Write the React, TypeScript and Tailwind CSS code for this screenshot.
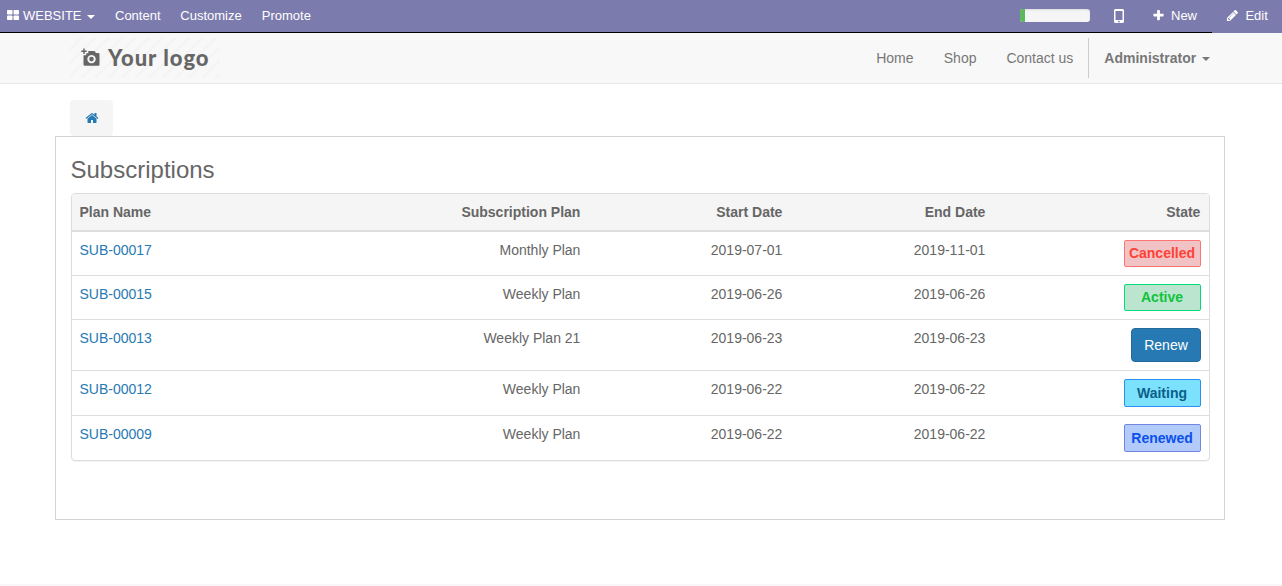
import React from "react";

type Row = {
  id: string;
  plan: string;
  start: string;
  end: string;
  state: string;
  height: string;
  badge: string;
};

const badge = "block w-[77px] rounded-[2px] border pr-px text-center font-bold ";

const rows: Row[] = [
  { id: "SUB-00017", plan: "Monthly Plan", start: "2019-07-01", end: "2019-11-01", state: "Cancelled", height: "h-11 border-b", badge: badge + "h-[27px] leading-[25px] border-[#ff7474] bg-[#f2c3c5] text-[#ff4136]" },
  { id: "SUB-00015", plan: "Weekly Plan", start: "2019-06-26", end: "2019-06-26", state: "Active", height: "h-11 border-b", badge: badge + "h-[27px] leading-[25px] border-[#00dc78] bg-[#bce5d0] text-[#0fc33c]" },
  { id: "SUB-00013", plan: "Weekly Plan 21", start: "2019-06-23", end: "2019-06-23", state: "Renew", height: "h-[51px] border-b", badge: "block h-[34px] w-[70px] rounded border border-[#246a9c] bg-[#2779b4] text-center leading-8 text-white" },
  { id: "SUB-00012", plan: "Weekly Plan", start: "2019-06-22", end: "2019-06-22", state: "Waiting", height: "h-[45px] border-b", badge: badge + "h-7 leading-[27px] border-[#2a8ff0] bg-[#7be1fc] text-[#0c5f8a]" },
  { id: "SUB-00009", plan: "Weekly Plan", start: "2019-06-22", end: "2019-06-22", state: "Renewed", height: "h-11", badge: badge + "h-7 leading-[27px] border-[#7287e4] bg-[#b3cbfa] text-[#0a50ec]" },
];

const columns = "grid grid-cols-[517px_202px_203px_215px]";

function Glyph({ d, className, viewBox = "0 0 1792 1792" }: { d: string; className: string; viewBox?: string }) {
  return (
    <svg viewBox={viewBox} className={className} fill="currentColor" aria-hidden="true">
      <path d={d} />
    </svg>
  );
}

const homePath =
  "M1472 992v480q0 26-19 45t-45 19h-384v-384h-256v384h-384q-26 0-45-19t-19-45v-480q0-1 .5-3t.5-3l575-474 575 474q1 2 1 6zm223-69l-62 74q-8 9-21 11h-3q-13 0-21-7l-692-577-692 577q-12 8-24 7-13-2-21-11l-62-74q-8-10-7-23.5t11-21.5l719-599q32-26 76-26t76 26l244 204v-195q0-14 9-23t23-9h192q14 0 23 9t9 23v408l219 182q10 8 11 21.5t-7 23.5z";
const plusPath =
  "M1600 736v192q0 40-28 68t-68 28h-416v416q0 40-28 68t-68 28h-192q-40 0-68-28t-28-68v-416h-416q-40 0-68-28t-28-68v-192q0-40 28-68t68-28h416v-416q0-40 28-68t68-28h192q40 0 68 28t28 68v416h416q40 0 68 28t28 68z";
const pencilPath =
  "M491 1536l91-91-235-235-91 91v107h128v128h107zm523-928q0-22-22-22-10 0-17 7l-542 542q-7 7-7 17 0 22 22 22 10 0 17-7l542-542q7-7 7-17zm-54-192l416 416-832 832h-416v-416zm683 96q0 53-37 90l-166 166-416-416 166-165q36-38 90-38 53 0 91 38l235 234q37 39 37 91z";

function TopBar() {
  return (
    <header className="flex h-[33px] bg-[#7c7bad] text-[13px] text-white">
      <div className="flex h-[33px] w-[1212px] border-b border-black leading-8">
        <div className="flex w-[115px] items-center pl-[7px]">
          <svg viewBox="0 0 12 10" className="mr-1 mb-[3px] h-[10px] w-3" fill="currentColor">
            <rect width="5.5" height="4.5" rx=".8" /><rect x="6.5" width="5.5" height="4.5" rx=".8" />
            <rect y="5.5" width="5.5" height="4.5" rx=".8" /><rect x="6.5" y="5.5" width="5.5" height="4.5" rx=".8" />
          </svg>
          <span className="w-[64px] whitespace-nowrap">WEBSITE</span>
          <span className="mt-[2px] border-x-4 border-t-4 border-x-transparent border-t-white" />
        </div>
        <span className="w-[65.3px]">Content</span>
        <span className="w-[81.5px]">Customize</span>
        <span>Promote</span>
        <div className="ml-auto flex items-center">
          <div className="mb-[1px] h-[13px] w-[70px] overflow-hidden rounded-[3px] bg-[#f5f5f5] shadow-[inset_0_1px_2px_rgba(0,0,0,0.1)]">
            <div className="h-full w-[5px] bg-[#5cb85c]" />
          </div>
          <svg viewBox="0 0 10 14" className="ml-6 h-[14px] w-[10px]">
            <path fill="white" fillRule="evenodd" d="M1.5 0h7Q10 0 10 1.5v11Q10 14 8.500 14h-7Q0 14 0 12.500v-11Q0 0 1.500 0ZM1.500 2v9h7V2ZM5 11.700a.8.8 0 1 0 .01 0Z" />
          </svg>
          <Glyph d={plusPath} className="mb-px ml-[28px] h-[13px] w-[13px]" />
          <span className="ml-[6px] w-[41px]">New</span>
        </div>
      </div>
      <div className="flex h-8 items-center pl-[14px]">
        <Glyph d={pencilPath} className="mb-px h-[13px] w-[13px]" />
        <span className="ml-[6.4px]">Edit</span>
      </div>
    </header>
  );
}

function Logo() {
  return (
    <div className="mt-[5px] flex h-10 w-[150px] items-center bg-[repeating-linear-gradient(135deg,#f8f8f8_0px,#f8f8f8_6.5px,#f4f4f4_7px,#f4f4f4_9px,#f8f8f8_9.5px)] pl-[10.5px] text-[#666]">
      <svg viewBox="0 0 19 18" className="mb-[2px] h-[18px] w-[19px]">
        <path fill="currentColor" fillRule="evenodd" d="M2.300 .5h1.400v2h2V4h-2v2H2.300V4h-2V2.500h2ZM7.300 3h6.200l1.500 2h2.300a1.200 1.200 0 0 1 1.200 1.200v10.300a1.200 1.200 0 0 1-1.200 1.200H3.700a1.200 1.200 0 0 1-1.200-1.200V7.300h2.700V5.200h2.100ZM10.500 6.900a4.200 4.200 0 1 0 .01 0Z" />
        <circle cx="10.500" cy="11.100" r="2.300" fill="currentColor" />
      </svg>
      <span className="ml-[8.5px] font-['Lato'] text-[22px] font-black leading-6 tracking-[1px] whitespace-nowrap">Your logo</span>
    </div>
  );
}

export default function App() {
  return (
    <div className="flex h-[586px] w-[1282px] flex-col overflow-hidden bg-white font-['Liberation_Sans',Arial,sans-serif] text-sm leading-5 text-[#666]">
      <TopBar />
      <nav className="flex h-[51px] border-b border-[#e7e7e7] bg-[#f8f8f8] pl-[70px] text-[#777]">
        <Logo />
        <div className="ml-[656px] flex pt-[15px] pl-[0.2px]">
          <a className="w-[67.6px]">Home</a>
          <a className="w-[62.6px]">Shop</a>
          <a className="w-[81.6px]">Contact us</a>
        </div>
        <div className="mt-[5px] flex h-10 items-center border-l border-[#ccc] pl-[15.4px] font-bold">
          Administrator
          <span className="mt-[2px] ml-[5.6px] border-x-4 border-t-4 border-x-transparent border-t-[#777]" />
        </div>
      </nav>
      <main className="ml-[55px] w-[1170px] pt-4">
        <div className="ml-[15px] flex h-9 w-[43px] items-center justify-center rounded bg-[#f5f5f5] text-[#2779b4]">
          <Glyph d={homePath} className="h-[14px] w-[14px]" />
        </div>
        <section className="h-[384px] border border-[#d3d3d3] px-[15px] pt-5">
          <h3 className="-ml-[0.5px] h-9 text-2xl leading-[26px]">Subscriptions</h3>
          <div className="w-[1139px] overflow-hidden rounded border border-[#ddd] shadow-[0_1px_1px_rgba(0,0,0,0.05)]">
            <div className={columns + " h-[38px] border-b-2 border-[#ddd] bg-[#f5f5f5] pt-2 font-bold"}>
              <div className="flex justify-between pr-[8.6px] pl-[7.5px]"><span>Plan Name</span><span>Subscription Plan</span></div>
              <span className="pr-[8.6px] text-right">Start Date</span>
              <span className="pr-[8.6px] text-right">End Date</span>
              <span className="pr-[8.6px] text-right">State</span>
            </div>
            {rows.map((row) => (
              <div key={row.id} className={columns + " border-[#ddd] pt-2 " + row.height}>
                <div className="flex justify-between pr-[8.6px] pl-[7.5px]"><a className="text-[#2779b4]">{row.id}</a><span>{row.plan}</span></div>
                <span className="pr-[8.6px] text-right [font-kerning:none]">{row.start}</span>
                <span className="pr-[8.6px] text-right [font-kerning:none]">{row.end}</span>
                <div className="flex items-start justify-end pr-2"><span className={row.badge}>{row.state}</span></div>
              </div>
            ))}
          </div>
        </section>
      </main>
      <footer className="mt-auto h-[2px] bg-[#f8f8f8]" />
    </div>
  );
}
